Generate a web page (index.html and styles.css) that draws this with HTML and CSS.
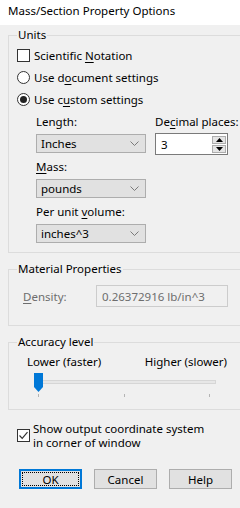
FILE: index.html
```html
<!DOCTYPE html>
<html lang="en">
<head>
  <meta charset="UTF-8">
  <title>Mass/Section Property Options</title>
  <link rel="stylesheet" href="styles.css">
</head>
<body>

<div class="titlebar">Mass/Section Property Options</div>

<div class="dialog">

  <fieldset class="group units">
    <legend>Units</legend>
    <div class="opt"><span class="check"></span><span>Scientific <u>N</u>otation</span></div>
    <div class="opt"><span class="radio"></span><span>Use d<u>o</u>cument settings</span></div>
    <div class="opt"><span class="radio on"></span><span>Use c<u>u</u>stom settings</span></div>

    <div class="units-grid">
      <div class="col">
        <div class="lbl">Length:</div>
        <div class="select"><span>Inches</span><svg class="chev" width="9" height="5" viewBox="0 0 9 5"><path d="M0.5 0.5 L4.5 4.5 L8.5 0.5" fill="none" stroke="#7a7a7a"/></svg></div>
        <div class="lbl"><u>M</u>ass:</div>
        <div class="select"><span>pounds</span><svg class="chev" width="9" height="5" viewBox="0 0 9 5"><path d="M0.5 0.5 L4.5 4.5 L8.5 0.5" fill="none" stroke="#7a7a7a"/></svg></div>
        <div class="lbl">Per unit <u>v</u>olume:</div>
        <div class="select last"><span>inches^3</span><svg class="chev" width="9" height="5" viewBox="0 0 9 5"><path d="M0.5 0.5 L4.5 4.5 L8.5 0.5" fill="none" stroke="#7a7a7a"/></svg></div>
      </div>
      <div class="col">
        <div class="lbl">De<u>c</u>imal places:</div>
        <div class="spinbox">
          <span class="val">3</span>
          <div class="spin">
            <span class="sb"><svg width="7" height="4" viewBox="0 0 7 4"><path d="M0 4 L3.5 0 L7 4 Z" fill="#000"/></svg></span>
            <span class="sb"><svg width="7" height="4" viewBox="0 0 7 4"><path d="M0 0 L3.5 4 L7 0 Z" fill="#000"/></svg></span>
          </div>
        </div>
      </div>
    </div>
  </fieldset>

  <fieldset class="group material">
    <legend>Material Properties</legend>
    <div class="density">
      <span class="dlabel"><u>D</u>ensity:</span>
      <span class="dbox">0.26372916 lb/in^3</span>
    </div>
  </fieldset>

  <fieldset class="group accuracy">
    <legend>Accuracy level</legend>
    <div class="ends">
      <span>Lower (faster)</span>
      <span>Higher (slower)</span>
    </div>
    <div class="slider">
      <div class="track"></div>
      <svg class="thumb" width="9" height="19" viewBox="0 0 9 19"><path d="M0 0 H9 V14 L4.5 19 L0 14 Z" fill="#0078d7"/></svg>
      <span class="tick t1"></span>
      <span class="tick t2"></span>
      <span class="tick t3"></span>
    </div>
  </fieldset>

  <div class="showcs">
    <span class="check"><svg width="11" height="11" viewBox="0 0 11 11"><path d="M1.5 5.5 L4.2 8.3 L9.5 2.2" fill="none" stroke="#333" stroke-width="1.2"/></svg></span>
    <span>Show output coordinate system<br>in corner of window</span>
  </div>

  <div class="buttons">
    <button class="btn default">OK</button>
    <button class="btn">Cancel</button>
    <button class="btn">Help</button>
  </div>

</div>

</body>
</html>
```

FILE: styles.css
```css
body {
  margin: 0;
  width: 240px;
  height: 508px;
  overflow: hidden;
  background: #f0f0f0;
  font-family: "Noto Sans", sans-serif;
  font-size: 11.5px;
  color: #000;
}

u {
  text-decoration-thickness: 1px;
  text-underline-offset: 2px;
}

.titlebar {
  height: 25px;
  box-sizing: border-box;
  background: #fff;
  padding-left: 8px;
  line-height: 21px;
}

.dialog {
  padding: 1px 0 0 8px;
}

.group {
  margin: 0;
  border: 1px solid #dcdcdc;
  border-right: none;
  padding: 0 0 0 8px;
  min-width: 0;
}

.group legend {
  padding: 0 1px;
  line-height: 18px;
}

/* units */
.units {
  padding-bottom: 5px;
}

.opt {
  height: 22px;
  display: flex;
  align-items: center;
  gap: 4px;
}

.check {
  width: 11px;
  height: 11px;
  border: 1px solid #333;
  background: #fff;
  display: inline-flex;
  align-items: center;
  justify-content: center;
  flex: none;
}

.radio {
  width: 11px;
  height: 11px;
  border: 1px solid #333;
  border-radius: 50%;
  background: #fff;
  flex: none;
  display: inline-flex;
  align-items: center;
  justify-content: center;
}

.radio.on::after {
  content: "";
  width: 7px;
  height: 7px;
  border-radius: 50%;
  background: #222;
}

.units-grid {
  display: grid;
  grid-template-columns: 119px auto;
  margin: 2px 0 0 19px;
}

.lbl {
  height: 20px;
  line-height: 20px;
  white-space: nowrap;
}

.select {
  width: 110px;
  height: 19px;
  box-sizing: border-box;
  margin: 2px 0 4px;
  padding: 0 6px 0 4px;
  background: #e1e1e1;
  border: 1px solid #adadad;
  display: flex;
  align-items: center;
  justify-content: space-between;
}

.spinbox {
  width: 73px;
  height: 22px;
  box-sizing: border-box;
  margin-top: 1px;
  background: #fff;
  border: 1px solid #7a7a7a;
  display: flex;
  align-items: center;
  justify-content: space-between;
  padding: 0 1px 0 5px;
}

.spin {
  display: flex;
  flex-direction: column;
  gap: 1px;
}

.sb {
  width: 14px;
  height: 8px;
  box-sizing: border-box;
  background: #e5e5e5;
  border: 1px solid #adadad;
  display: flex;
  align-items: center;
  justify-content: center;
}

/* material */
.material {
  margin-top: 7px;
  padding-bottom: 18px;
}

.density {
  display: flex;
  align-items: center;
  margin-top: 7px;
  padding-left: 6px;
  color: #6d6d6d;
}

.dlabel {
  width: 73px;
}

.dbox {
  width: 132px;
  height: 22px;
  box-sizing: border-box;
  border: 1px solid #cccccc;
  background: #f0f0f0;
  display: flex;
  align-items: center;
  padding-left: 5px;
}

/* accuracy */
.accuracy {
  margin-top: 7px;
  padding-bottom: 12px;
}

.ends {
  display: flex;
  justify-content: space-between;
  width: 200px;
  margin: 1px 0 0 10px;
  height: 20px;
  line-height: 20px;
}

.slider {
  position: relative;
  height: 25px;
}

.track {
  position: absolute;
  left: 22px;
  top: 8px;
  width: 175px;
  height: 2px;
  background: #e7e7e7;
  border: 1px solid #d6d6d6;
}

.thumb {
  position: absolute;
  left: 17px;
  top: 1px;
}

.tick {
  position: absolute;
  top: 22px;
  width: 1px;
  height: 3px;
  background: #b4b4b4;
}

.t1 { left: 21px; }
.t2 { left: 107px; }
.t3 { left: 192px; }

/* bottom */
.showcs {
  display: flex;
  align-items: flex-start;
  gap: 3px;
  margin: 12px 0 0 9px;
  line-height: 14px;
}

.showcs .check {
  margin-top: 7px;
}

.buttons {
  display: flex;
  gap: 12px;
  margin: 19px 0 0 11px;
}

.btn {
  width: 63px;
  height: 20px;
  padding: 0;
  font-family: "Noto Sans", sans-serif;
  font-size: 11.5px;
  color: #000;
  background: #e1e1e1;
  border: 1px solid #adadad;
}

.btn.default {
  border: 2px solid #0078d7;
  outline: 1px dotted #000;
  outline-offset: -4px;
}
```
